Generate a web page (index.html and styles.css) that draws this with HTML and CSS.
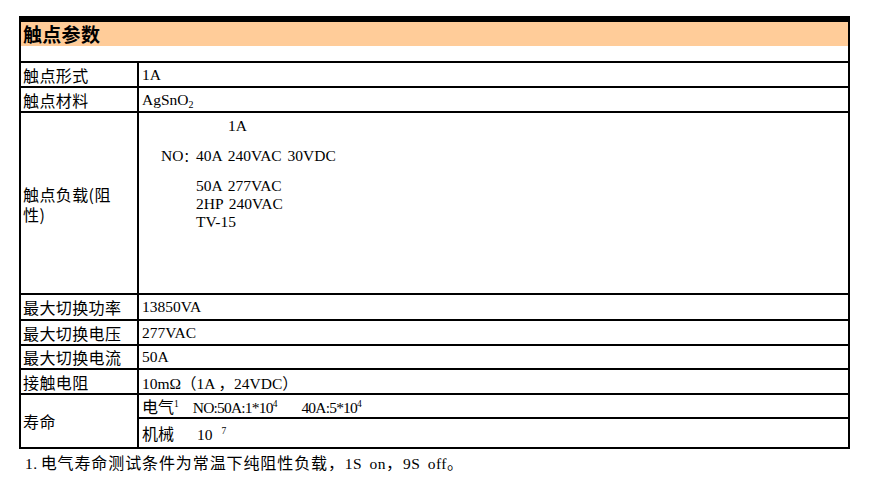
FILE: index.html
```html
<!DOCTYPE html>
<html lang="zh">
<head>
<meta charset="utf-8">
<title>触点参数</title>
<link rel="stylesheet" href="styles.css">
</head>
<body>
<div class="sheet">
  <div class="title">
    <div class="title-band">触点参数</div>
    <div class="title-gap"></div>
  </div>
  <div class="row h23">
    <div class="lab">触点形式</div>
    <div class="val"><span>1A</span></div>
  </div>
  <div class="row h23">
    <div class="lab">触点材料</div>
    <div class="val"><span>AgSnO<sub class="sub">2</sub></span></div>
  </div>
  <div class="row h180">
    <div class="lab lab2"><span>触点负载(阻<br>性)</span></div>
    <div class="val load">
      <div class="ln l1">1A</div>
      <div class="ln l2"><span class="no">NO<span class="cjk colon">：</span></span><span>40A 240VAC 30VDC</span></div>
      <div class="ln l3">50A 277VAC</div>
      <div class="ln l4">2HP 240VAC</div>
      <div class="ln l4">TV-15</div>
    </div>
  </div>
  <div class="row h24">
    <div class="lab">最大切换功率</div>
    <div class="val"><span>13850VA</span></div>
  </div>
  <div class="row h23">
    <div class="lab">最大切换电压</div>
    <div class="val"><span>277VAC</span></div>
  </div>
  <div class="row h22">
    <div class="lab">最大切换电流</div>
    <div class="val"><span>50A</span></div>
  </div>
  <div class="row h23">
    <div class="lab">接触电阻</div>
    <div class="val"><span>10mΩ<span class="cjk">（</span>1A <span class="cjk">，</span>24VDC<span class="cjk">）</span></span></div>
  </div>
  <div class="row life">
    <div class="lab">寿命</div>
    <div class="subs">
      <div class="sub-row s1"><span><span class="cjk">电气</span><sup class="sup">1</sup><span class="elec">NO:50A:1*10<sup class="sup">4</sup></span><span class="elec elec2">40A:5*10<sup class="sup">4</sup></span></span></div>
      <div class="sub-row s2"><span><span class="cjk">机械</span><span class="mech">10</span><sup class="sup sup7">7</sup></span></div>
    </div>
  </div>
  <p class="note"><span class="lat n1">1.</span>电气寿命测试条件为常温下纯阻性负载，<span class="lat">1S on</span>，<span class="lat">9S off</span>。</p>
</div>
</body>
</html>
```

FILE: styles.css
```css
html, body {
  margin: 0;
  padding: 0;
  background: #ffffff;
}

body {
  color: #000000;
  font-family: "Noto Sans CJK SC", "Noto Sans", sans-serif;
}

.sheet {
  width: 831px;
  margin: 16px 0 0 19px;
}

.title {
  border-top: 6px solid #000;
  border-left: 2px solid #000;
  border-right: 2px solid #000;
  border-bottom: 2px solid #000;
}

.title-band {
  height: 24px;
  line-height: 24px;
  background: #ffcc99;
  font-size: 19px;
  font-weight: bold;
  padding-left: 2px;
  letter-spacing: 0.3px;
}

.title-gap {
  height: 15px;
}

.row {
  display: flex;
  border-left: 2px solid #000;
  border-right: 2px solid #000;
  border-bottom: 2px solid #000;
}

.h22 { height: 22px; }
.h23 { height: 23px; }
.h24 { height: 24px; }
.h180 { height: 180px; }
.life { height: 52px; }

.lab {
  width: 114px;
  flex: none;
  padding-left: 2px;
  border-right: 2px solid #000;
  font-size: 16px;
  line-height: 20px;
  letter-spacing: 0.4px;
  display: flex;
  align-items: center;
}

.lab2 {
  padding-top: 2px;
}

.val {
  flex: 1;
  padding-left: 3px;
  font-family: "Liberation Serif", serif;
  font-size: 15.5px;
  display: flex;
  align-items: center;
  white-space: pre;
}

.cjk {
  font-family: "Noto Sans CJK SC", sans-serif;
  letter-spacing: 0;
}

.sub {
  font-size: 10px;
  vertical-align: -3px;
  line-height: 0;
}

.sup {
  font-family: "Liberation Serif", serif;
  font-size: 9.5px;
  line-height: 0;
  vertical-align: 6px;
  letter-spacing: 0;
}

.load {
  display: block;
  padding-top: 4px;
  white-space: normal;
}

.ln {
  height: 18px;
  line-height: 18px;
  white-space: pre;
  word-spacing: 2px;
}

.l1 { padding-left: 86px; margin-bottom: 12px; }
.l2 { padding-left: 19px; margin-bottom: 12px; }
.l2 .no { display: inline-block; width: 35px; }
.l2 .colon { font-size: 13px; }
.l3, .l4 { padding-left: 54px; }

.subs {
  flex: 1;
  display: flex;
  flex-direction: column;
}

.sub-row {
  display: flex;
  align-items: center;
  padding-left: 3px;
  font-family: "Liberation Serif", serif;
  font-size: 15.5px;
  white-space: pre;
}

.sub-row .cjk {
  font-size: 16px;
}

.s1 {
  height: 22px;
  border-bottom: 2px solid #000;
}

.s2 {
  height: 28px;
}

.elec {
  margin-left: 14px;
  letter-spacing: -0.8px;
}

.elec2 {
  margin-left: 24px;
}

.mech {
  margin-left: 23px;
}

.sup7 {
  margin-left: 9px;
}

.note {
  margin: 3px 0 0 0;
  padding-left: 6px;
  font-size: 16px;
  line-height: 20px;
  letter-spacing: 0.9px;
  white-space: pre;
}

.lat {
  font-family: "Liberation Serif", serif;
  font-size: 15.5px;
  letter-spacing: 0.5px;
  word-spacing: 3px;
}

.n1 {
  margin-right: 3px;
}
```
